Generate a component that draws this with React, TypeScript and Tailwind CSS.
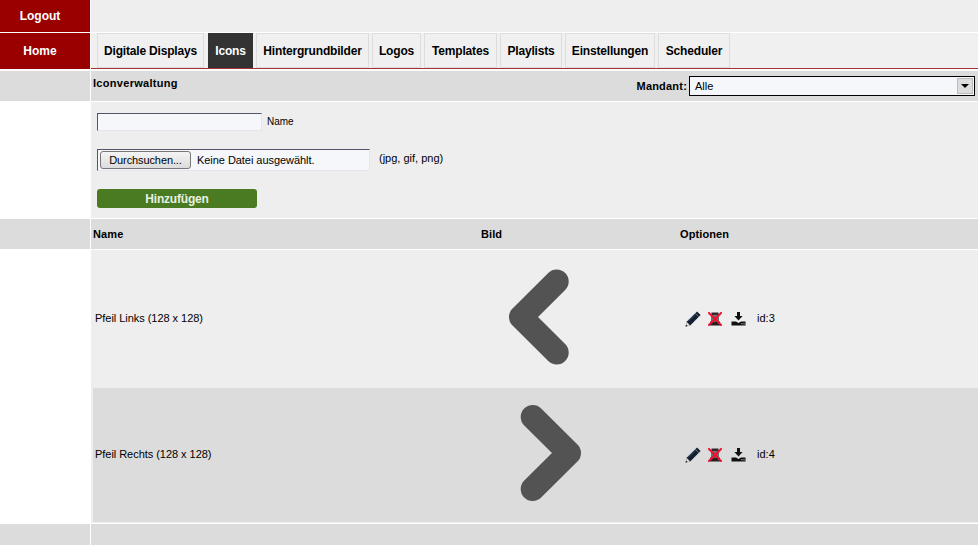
const font = { fontFamily: '"Liberation Sans", Arial, sans-serif' };

const tabs = [
  { label: "Digitale Displays", box: "w-[107px]" },
  { label: "Icons", box: "ml-[1px] w-[45px]" },
  { label: "Hintergrundbilder", box: "w-[113px]" },
  { label: "Logos", box: "w-[49px]" },
  { label: "Templates", box: "w-[73px]" },
  { label: "Playlists", box: "w-[62px]" },
  { label: "Einstellungen", box: "w-[90px]" },
  { label: "Scheduler", box: "w-[72px]" },
];

function Pencil() {
  return (
    <svg width="16" height="16" viewBox="0 0 16 16" className="shrink-0">
      <path d="M12 0.4 15.6 4 5.2 14.4 0.6 15.4 1.6 10.8Z" fill="#14202f" />
      <path d="M1.6 10.8 5.2 14.4 0.6 15.4Z" fill="#e6dcc8" />
      <path d="M0.6 15.4 1.1 13.4 2.7 15Z" fill="#111" />
      <path d="M10.2 2.2 13.8 5.8" stroke="#6f7f90" strokeWidth="0.9" />
      <path d="M3.6 9.8 10.6 2.8" stroke="#3d6a94" strokeWidth="0.8" />
    </svg>
  );
}

function Delete() {
  return (
    <svg width="14" height="14" viewBox="0 0 14 14" className="mr-[2px] shrink-0">
      <rect x="3.5" y="0.5" width="7" height="3" fill="#2b2b2b" />
      <rect x="3" y="3.5" width="8" height="6" fill="#6e6e6e" />
      <rect x="2" y="9.5" width="10" height="4" fill="#222222" />
      <path d="M0.3 0.3 13.7 13.7M13.7 0.3 0.3 13.7" stroke="#f01030" strokeWidth="2" />
    </svg>
  );
}

function Download() {
  return (
    <svg width="15" height="14" viewBox="0 0 15 14" className="shrink-0">
      <path d="M6 0h3v4h2.6L7.5 8.6 3.4 4H6Z" fill="#111" />
      <path d="M0.5 9.5H5L7.5 11 10 9.5H14.5V13.5H0.5Z" fill="#111" />
      <rect x="10.5" y="11.3" width="1" height="1" fill="#eeeeee" />
      <rect x="12.5" y="11.3" width="1" height="1" fill="#eeeeee" />
    </svg>
  );
}

function Chevron({ d }: { d: string }) {
  return (
    <svg width="128" height="128" viewBox="0 0 128 128" className="block">
      <path d={d} fill="none" stroke="#535353" strokeWidth="24" strokeLinecap="round" strokeLinejoin="round" />
    </svg>
  );
}

function Row({ name, id, chevron, className }: { name: string; id: number; chevron: string; className: string }) {
  return (
    <div className={`grid grid-cols-[386px_199px_1fr] items-center pb-[2px] ${className}`}>
      <div className="text-[11px] tracking-[-0.04px] text-black">{name}</div>
      <div className="flex items-center">
        <Chevron d={chevron} />
      </div>
      <div className="flex items-center pl-[5px] text-[11px] text-black">
        <div className="mt-[1px] flex items-center gap-[7px]">
          <Pencil />
          <Delete />
          <Download />
        </div>
        <span className="ml-[11px]">id:{id}</span>
      </div>
    </div>
  );
}

export default function App() {
  return (
    <div className="h-[545px] w-[978px] overflow-hidden bg-white" style={font}>
      <div className="flex h-[33px] gap-[1px] pb-[1px]">
        <div className="flex w-[90px] items-center justify-center bg-[#990000] pr-[10px] text-xs font-bold text-white">Logout</div>
        <div className="flex-1 bg-[#eeeeee]" />
      </div>
      <div className="flex h-[38px] gap-[1px] pb-[2px]">
        <div className="flex w-[90px] items-center justify-center bg-[#990000] pr-[10px] text-xs font-bold text-white">Home</div>
        <div className="flex flex-1 gap-[3px] border-b border-[#a83232] bg-[#f0f0f0] pl-[6px]">
          {tabs.map((t) => (
            <div
              key={t.label}
              className={`flex h-[35px] items-center justify-center text-xs font-bold tracking-[-0.18px] ${t.box} ${
                t.label === "Icons" ? "bg-[#333333] text-white" : "border border-[#dddddd] text-black"
              }`}
            >
              {t.label}
            </div>
          ))}
        </div>
      </div>
      <div className="flex h-[31px] gap-[1px] pb-[1px]">
        <div className="w-[90px] bg-[#dcdcdc]" />
        <div className="flex flex-1 items-start justify-between bg-[#dcdcdc] pl-[2px]">
          <div className="pt-[4px] text-[11px] font-bold tracking-[0.3px] text-black">Iconverwaltung</div>
          <div className="flex items-center pr-[3px] pt-[5px]">
            <span className="mr-[2px] text-[11px] font-bold tracking-[0.2px] text-black">Mandant:</span>
            <div className="flex h-[20px] w-[286px] items-center justify-between border border-black bg-[#f5f7fb] pl-[5px] text-[11px] text-black">
              <span>Alle</span>
              <span className="mr-[1px] flex h-[16px] w-[16px] items-center justify-center border border-[#bbbbbb] bg-[#dddddd]">
                <svg width="8" height="4" viewBox="0 0 8 4"><path d="M0 0h8L4 4Z" fill="#000" /></svg>
              </span>
            </div>
          </div>
        </div>
      </div>
      <div className="flex h-[117px] gap-[1px] pb-[1px]">
        <div className="w-[90px] bg-white" />
        <div className="flex flex-1 flex-col bg-[#eeeeee] pl-[6px] pt-[11px]">
          <div className="flex items-center gap-[5px]">
            <div className="h-[18px] w-[165px] border-b border-l border-r border-t border-b-[#e4e6ee] border-l-[#55556a] border-r-[#e4e6ee] border-t-[#55556a] bg-[#f5f7fb]" />
            <span className="pb-[2px] text-[10px] text-black">Name</span>
          </div>
          <div className="mt-[18px] flex items-center gap-[9px]">
            <div className="flex h-[22px] w-[273px] items-center border-b border-l border-r border-t border-b-[#e4e6ee] border-l-[#55556a] border-r-[#e4e6ee] border-t-[#55556a] bg-[#f5f7fb] pl-[2px] text-[11px] text-black">
              <div className="flex h-[18px] w-[91px] items-center justify-center rounded-[3px] border border-[#777777] bg-gradient-to-b from-[#f4f4f4] to-[#dcdcdc] pt-[1px] tracking-[-0.1px]">Durchsuchen...</div>
              <span className="ml-[6px] pt-[1px] tracking-[-0.05px]">Keine Datei ausgewählt.</span>
            </div>
            <span className="pb-[3px] text-[11px] text-black">(jpg, gif, png)</span>
          </div>
          <div className="mt-[18px] flex h-[19px] w-[160px] items-center justify-center rounded-[3px] bg-[#4a7a22] text-xs font-bold tracking-[-0.2px] text-[#e8f0e0]">Hinzufügen</div>
        </div>
      </div>
      <div className="flex h-[31px] gap-[1px] pb-[1px]">
        <div className="w-[90px] bg-[#dcdcdc]" />
        <div className="grid flex-1 grid-cols-[388px_199px_1fr] items-center bg-[#dcdcdc] pl-[2px] text-[11px] font-bold tracking-[0.1px] text-black">
          <span>Name</span>
          <span>Bild</span>
          <span>Optionen</span>
        </div>
      </div>
      <div className="flex h-[274px] gap-[1px]">
        <div className="w-[90px] bg-white" />
        <div className="flex flex-1 flex-col border-b border-white bg-[#eeeeee] pb-[1px] pl-[2px]">
          <Row name="Pfeil Links (128 x 128)" id={3} chevron="M75.7 27.5 40 63 75.7 98.5" className="h-[138px] pl-[2px]" />
          <Row name="Pfeil Rechts (128 x 128)" id={4} chevron="M51.7 27 88 63 51.7 99" className="h-[134px] bg-[#dcdcdc] pl-[2px]" />
        </div>
      </div>
      <div className="flex h-[21px] gap-[1px]">
        <div className="w-[90px] bg-[#dcdcdc]" />
        <div className="flex-1 bg-[#dcdcdc]" />
      </div>
    </div>
  );
}
